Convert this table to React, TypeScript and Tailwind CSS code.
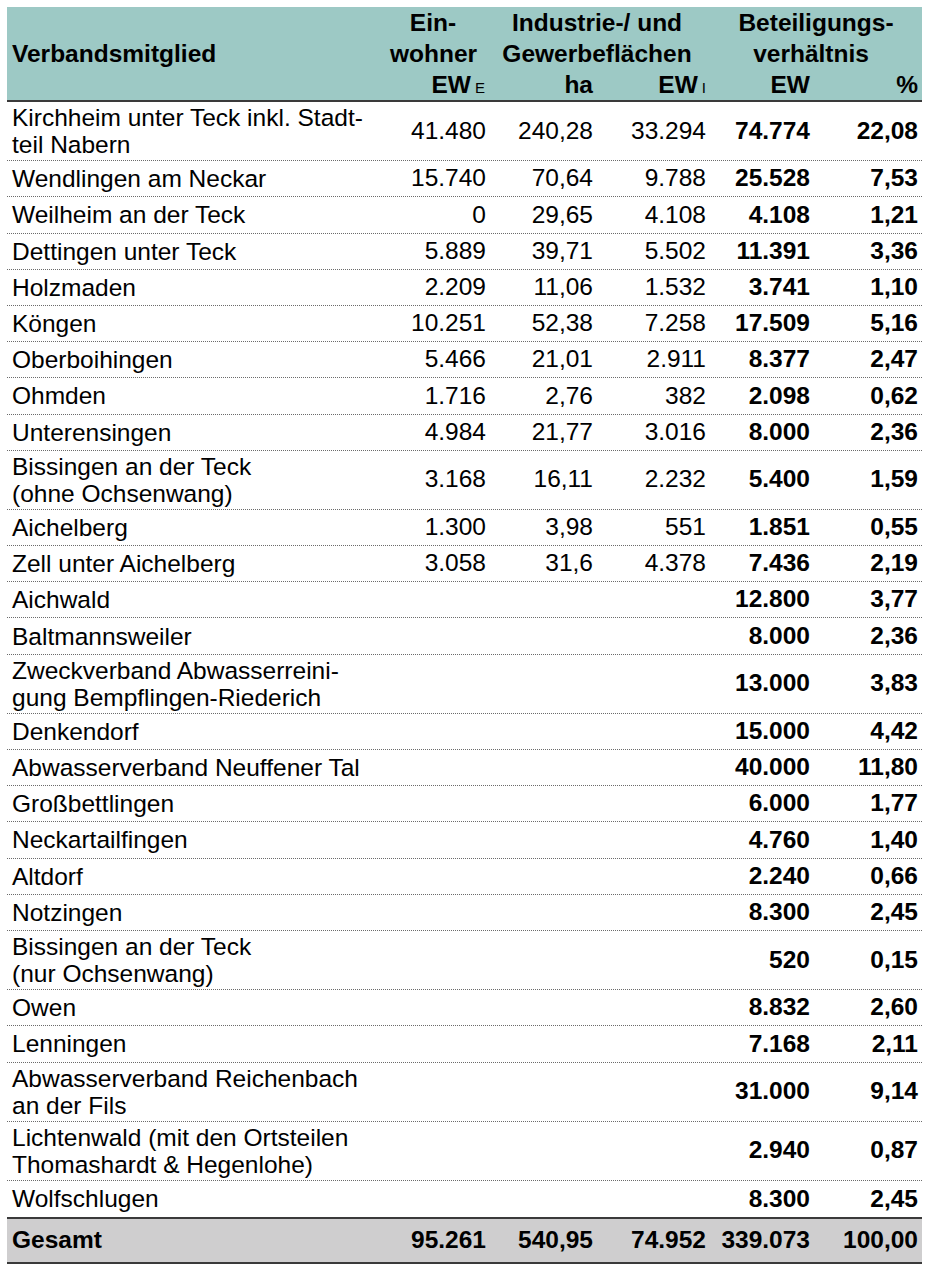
type Row = {
  name: string[];
  ewE?: string;
  ha?: string;
  ewI?: string;
  ew: string;
  pct: string;
};

const rows: Row[] = [
  { name: ["Kirchheim unter Teck inkl. Stadt-", "teil Nabern"], ewE: "41.480", ha: "240,28", ewI: "33.294", ew: "74.774", pct: "22,08" },
  { name: ["Wendlingen am Neckar"], ewE: "15.740", ha: "70,64", ewI: "9.788", ew: "25.528", pct: "7,53" },
  { name: ["Weilheim an der Teck"], ewE: "0", ha: "29,65", ewI: "4.108", ew: "4.108", pct: "1,21" },
  { name: ["Dettingen unter Teck"], ewE: "5.889", ha: "39,71", ewI: "5.502", ew: "11.391", pct: "3,36" },
  { name: ["Holzmaden"], ewE: "2.209", ha: "11,06", ewI: "1.532", ew: "3.741", pct: "1,10" },
  { name: ["Köngen"], ewE: "10.251", ha: "52,38", ewI: "7.258", ew: "17.509", pct: "5,16" },
  { name: ["Oberboihingen"], ewE: "5.466", ha: "21,01", ewI: "2.911", ew: "8.377", pct: "2,47" },
  { name: ["Ohmden"], ewE: "1.716", ha: "2,76", ewI: "382", ew: "2.098", pct: "0,62" },
  { name: ["Unterensingen"], ewE: "4.984", ha: "21,77", ewI: "3.016", ew: "8.000", pct: "2,36" },
  { name: ["Bissingen an der Teck", "(ohne Ochsenwang)"], ewE: "3.168", ha: "16,11", ewI: "2.232", ew: "5.400", pct: "1,59" },
  { name: ["Aichelberg"], ewE: "1.300", ha: "3,98", ewI: "551", ew: "1.851", pct: "0,55" },
  { name: ["Zell unter Aichelberg"], ewE: "3.058", ha: "31,6", ewI: "4.378", ew: "7.436", pct: "2,19" },
  { name: ["Aichwald"], ew: "12.800", pct: "3,77" },
  { name: ["Baltmannsweiler"], ew: "8.000", pct: "2,36" },
  { name: ["Zweckverband Abwasserreini-", "gung Bempflingen-Riederich"], ew: "13.000", pct: "3,83" },
  { name: ["Denkendorf"], ew: "15.000", pct: "4,42" },
  { name: ["Abwasserverband Neuffener Tal"], ew: "40.000", pct: "11,80" },
  { name: ["Großbettlingen"], ew: "6.000", pct: "1,77" },
  { name: ["Neckartailfingen"], ew: "4.760", pct: "1,40" },
  { name: ["Altdorf"], ew: "2.240", pct: "0,66" },
  { name: ["Notzingen"], ew: "8.300", pct: "2,45" },
  { name: ["Bissingen an der Teck", "(nur Ochsenwang)"], ew: "520", pct: "0,15" },
  { name: ["Owen"], ew: "8.832", pct: "2,60" },
  { name: ["Lenningen"], ew: "7.168", pct: "2,11" },
  { name: ["Abwasserverband Reichenbach", "an der Fils"], ew: "31.000", pct: "9,14" },
  { name: ["Lichtenwald (mit den Ortsteilen", "Thomashardt & Hegenlohe)"], ew: "2.940", pct: "0,87" },
  { name: ["Wolfschlugen"], ew: "8.300", pct: "2,45" },
];

function DataRow({ row, last }: { row: Row; last: boolean }) {
  const double = row.name.length > 1;
  return (
    <div
      className={`flex items-center ${double ? "h-[59.2px]" : "h-[36.2px]"} ${
        last ? "" : "border-b border-dotted border-[#6b6b6b]"
      }`}
    >
      <div className="w-[383px] pl-[5px] leading-[27px]">
        {row.name.map((n) => (
          <div key={n}>{n}</div>
        ))}
      </div>
      <div className="w-[100px] pr-[4px] text-right">{row.ewE}</div>
      <div className="w-[107px] pr-[4px] text-right">{row.ha}</div>
      <div className="w-[113px] pr-[4px] text-right">{row.ewI}</div>
      <div className="w-[104px] pr-[4px] text-right font-bold">{row.ew}</div>
      <div className="w-[108px] pr-[4px] text-right font-bold">{row.pct}</div>
    </div>
  );
}

export default function App() {
  return (
    <div className="min-h-screen bg-white pt-[7px] pl-[7px] text-black">
      <div
        className="w-[915px] text-[24.5px]"
        style={{ fontFamily: '"Liberation Sans", Arial, sans-serif' }}
      >
        {/* Kopfzeile */}
        <div className="grid grid-cols-[383px_100px_107px_113px_104px_108px] grid-rows-[31px_31px_31px] bg-[#9dc9c5] border-b-2 border-[#3a3a3a] font-bold leading-[31px]">
          <div className="row-span-3 flex items-center pl-[5px]">Verbandsmitglied</div>
          <div className="pr-[14px] text-center">Ein-</div>
          <div className="col-span-2 text-center pr-[6px]">Industrie-/ und</div>
          <div className="col-span-2 text-center">Beteiligungs-</div>
          <div className="pr-[14px] text-center">wohner</div>
          <div className="col-span-2 text-center pr-[6px]">Gewerbeflächen</div>
          <div className="col-span-2 text-center pr-[10px]">verhältnis</div>
          <div className="pr-[5px] text-right">
            EW<span className="ml-[4px] text-[15px] font-normal">E</span>
          </div>
          <div className="pr-[4px] text-right">ha</div>
          <div className="pr-[4px] text-right">
            EW<span className="ml-[4px] text-[15px] font-normal">I</span>
          </div>
          <div className="pr-[4px] text-right">EW</div>
          <div className="pr-[4px] text-right">%</div>
        </div>

        {rows.map((r, i) => (
          <DataRow key={i} row={r} last={i === rows.length - 1} />
        ))}

        {/* Summenzeile */}
        <div className="flex h-[47px] items-center border-y-2 border-[#3a3a3a] bg-[#cfcecf] font-bold">
          <div className="w-[383px] pl-[5px]">Gesamt</div>
          <div className="w-[100px] pr-[4px] text-right">95.261</div>
          <div className="w-[107px] pr-[4px] text-right">540,95</div>
          <div className="w-[113px] pr-[4px] text-right">74.952</div>
          <div className="w-[104px] pr-[4px] text-right">339.073</div>
          <div className="w-[108px] pr-[4px] text-right">100,00</div>
        </div>
      </div>
    </div>
  );
}
